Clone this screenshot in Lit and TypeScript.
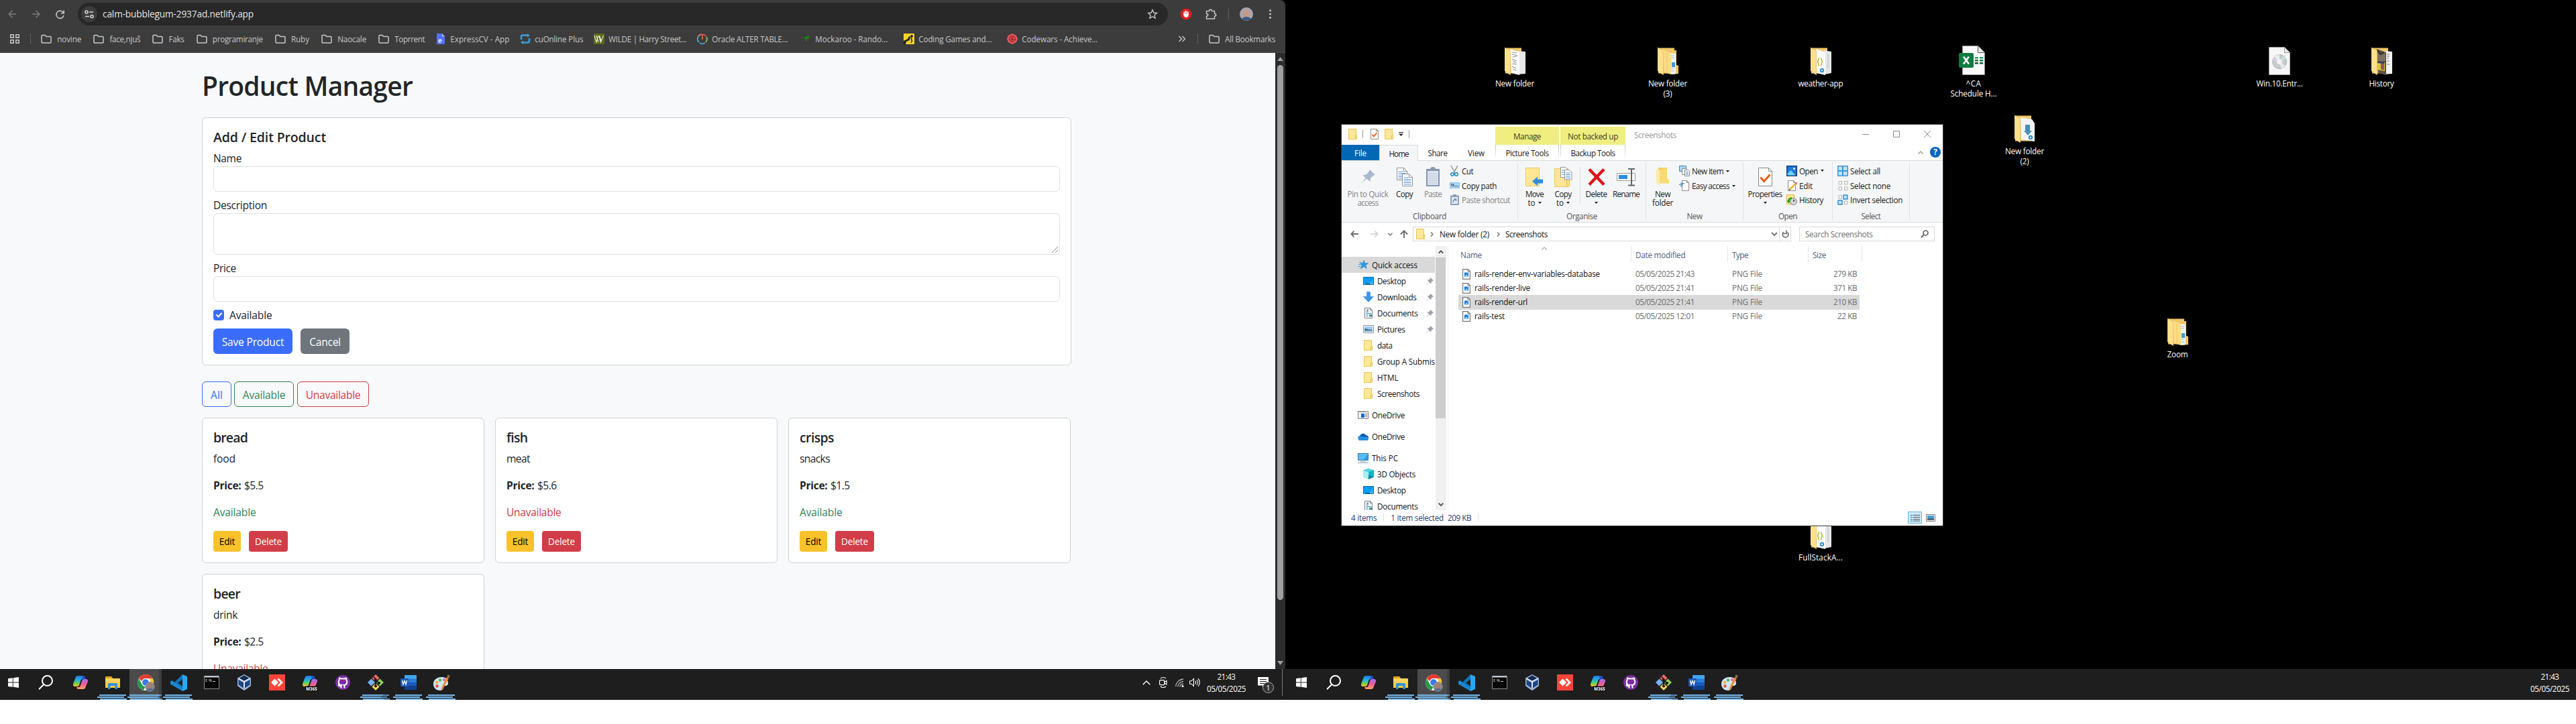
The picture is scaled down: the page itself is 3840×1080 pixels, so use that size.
import { LitElement, html, svg, css, nothing, TemplateResult } from "lit";
import { customElement, property } from "lit/decorators.js";

/* ---------- shared pieces ---------- */

const base = css`
  * { box-sizing: border-box; }
  :host { display: block; font-family: "Open Sans", "Noto Sans", sans-serif; font-size: 11.7px; line-height: 16px; }
  svg { display: block; flex: none; overflow: visible; }
  .t { white-space: pre; display: inline-block; flex: none; }
`;

/** Base element: tightens or loosens labels marked with data-w to their design width. */
class Fitted extends LitElement {
  updated() {
    this.renderRoot.querySelectorAll<HTMLElement>("[data-w]").forEach((el) => {
      el.style.letterSpacing = "0px";
      const n = (el.textContent || "").length;
      const d = (Number(el.dataset.w) - el.getBoundingClientRect().width) / n;
      el.style.letterSpacing = d.toFixed(3) + "px";
    });
  }
}

const T = (text: string, w: number, cls = "") => html`<span class="t ${cls}" data-w=${w}>${text}</span>`;

const S = (w: number, h: number, body: unknown, vb = `0 0 ${w} ${h}`) =>
  html`<svg width=${w} height=${h} viewBox=${vb} fill="none">${body}</svg>`;

/* ---------- small explorer icons ---------- */

const folder = () => S(16, 16, svg`<path d="M1.500.5h11v15h-11z" fill="#ffe799" stroke="#e9c455"/><path d="M11.500 15.500v-5.500l2-1v6.500z" fill="#ffe088" stroke="#e9c455"/>`);
const docCheck = () => S(12, 16, svg`<path d="M.5.5h8l3 3v12H.5z" fill="#fff" stroke="#8a8a8a"/><path d="M8.500.5v3h3" stroke="#8a8a8a"/><path d="M2.500 8.500l2.500 3 4.500-5.500" stroke="#ee5a17" stroke-width="1.800"/>`);
const caret = () => S(5, 3, svg`<path d="M0 0h5L2.500 3z" fill="#1b1b1b"/>`);
const docs16 = () => S(16, 16, svg`<path d="M2.500.5h8l3 3v12h-11z" fill="#fff" stroke="#7f7f7f"/><path d="M10.500.5v3h3" stroke="#7f7f7f"/><path d="M4.500 6.500h3M4.500 8.500h8M4.500 10.500h3M4.500 12.500h3" stroke="#2d8fd8"/><path d="M5 5.200l2-2.500v3" stroke="#2d8fd8" stroke-width="1.200"/><path d="M9 10h4v3.500H9z" fill="#4b8a9d"/>`);
const desktop16 = () => S(16, 12, svg`<path d="M.5.5h15v11H.5z" fill="#0a9bf5" stroke="#0670b8"/><path d="M8 11l7-8v8z" fill="#2cb0ff"/><path d="M1 10.500h14" stroke="#0a5c98"/><path d="M2 10.500h1M11 10.500h1M13 10.500h1" stroke="#fff"/>`);
const down16 = () => S(16, 16, svg`<path d="M5.500.5h5v7h5L8 15.500.5 7.500h5z" fill="#3c97e4" stroke="#2f7fc8" stroke-width=".6"/>`);
const pic16 = () => S(16, 12, svg`<path d="M.5.5h15v11H.5z" fill="#fff" stroke="#8b9096"/><path d="M2 2h12v8H2z" fill="#9dcbf5"/><path d="M2 5c3 0 5 1.500 12 2v3H2z" fill="#3f7580"/><path d="M2 8.500c4-1 8 0 12-.5v2H2z" fill="#8fb8e0"/>`);
const star16 = () => S(16, 14, svg`<path d="M9 .5l1.700 4.200 4.800.1-3.800 2.900 1.500 4.800L9 9.700 4.700 12.600l1.500-4.700L3.500 5l4-.3z" fill="#2a9be8" stroke="#1b7cc4" stroke-width=".6"/><path d="M2 3.500h4M1 6.500h3M0 9.500h5M3 12h2" stroke="#4aa9ea"/>`);
const oneOrg = () => S(16, 12, svg`<path d="M.5.5h15v11H.5z" fill="#f2f2f2" stroke="#7d7d7d"/><path d="M0 1h16" stroke="#9a9a9a" stroke-width="2"/><path d="M5 4h5v6H5z" fill="#0f6fd0"/><path d="M11 4.500h3M11 6.500h3M11 8.500h3" stroke="#888"/><path d="M12 1h1M14 1h1" stroke="#fff"/>`);
const cloud = () => S(16, 11, svg`<path d="M3 4.500C4 1 9-1 12 3c3 .3 4 2 4 4L8 8 0 6.500c0-1 1-2 3-2z" fill="#0b5fb0"/><path d="M1 9.500C-1 6.500 3 3.500 6 5l4 1c4-2 6 0 6 2.500S14.500 11 13 11H3c-1 0-1.700-.7-2-1.500z" fill="#2590e0"/>`);
const pc16 = () => S(16, 15, svg`<path d="M.5.5h15v10H.5z" fill="#59bdf7" stroke="#38759f"/><path d="M8 10l7-8v8z" fill="#2aa0ec"/><path d="M4 12.500h8" stroke="#9fb4c4"/><path d="M0 14.300h16" stroke="#8798a8"/>`);
const cube = () => S(16, 16, svg`<path d="M8 0l8 2.500v10L8 16l-8-3.500v-10z" fill="#12b5c8"/><path d="M0 2.500L8 5v11l-8-3.500z" fill="#a8eef2"/><path d="M0 2.500L8 0l8 2.500L8 5z" fill="#4fd3de"/><path d="M8 10l8 2.500L8 16z" fill="#0b7f92"/>`);
const pinned = () => S(11, 11, svg`<path d="M6.500 0l4.500 4.500-1.300.4L7.500 7l-.2 2.500L4.200 6.800.5 10.500l-.5.500.5-1L4 6.300 1.200 3.700l2.600-.2L6 1.300z" fill="#98a4af"/>`);
const png = () => S(12, 16, svg`<path d="M.6.6h7.600l3.200 3.200v11.600H.6z" fill="#fff" stroke="#777" stroke-width="1.200"/><path d="M8 .6v3.400h3.400" stroke="#777"/><path d="M3 5.500h6v6H3z" fill="#1674d1"/><path d="M3 11.500l3-3.500 3 3.500z" fill="#8fd0ff"/><path d="M7 6.500h1v1H7z" fill="#fff"/>`);
const lined = (x: number, y: number, c = "#5d93d8") => svg`<path d="M${x + 0.5} ${y + 0.5}h10l5 5v13h-15z" fill="#fff" stroke="#8f9399"/><path d="M${x + 10.5} ${y + 0.5}v5h5" stroke="#8f9399"/><path d="M${x + 2.5} ${y + 6}h7M${x + 2.5} ${y + 8.5}h11M${x + 2.5} ${y + 11}h11M${x + 2.5} ${y + 13.5}h11M${x + 2.5} ${y + 16}h11" stroke="${c}"/>`;

/* ---------- explorer window ---------- */

const chevR = () => S(5, 7, svg`<path d="M1 .5l3 3-3 3" stroke="#6b6b6b" stroke-width="1.300"/>`);

@customElement("explorer-window")
class ExplorerWindow extends Fitted {
  static styles = [base, css`
    :host { width: 896px; height: 598px; background: #fff; box-shadow: 0 0 0 1px #3a3a3a; color: #1b1b1b; display: flex; flex-direction: column; overflow: hidden; }
    .row { display: flex; align-items: center; }
    .title { display: flex; height: 30px; flex: none; }
    .qat { width: 229px; display: flex; align-items: center; padding: 0 0 2px 9px; height: 30px; }
    .qat .bar { width: 1px; height: 12px; background: #9b9b9b; }
    .m1 { margin-left: 6px; } .m2 { margin-left: 11px; } .m3 { margin-left: 8px; } .m4 { margin-left: 6px; }
    .ctx { background: #f0ee80; height: 27px; align-self: flex-end; display: flex; align-items: center; justify-content: center; margin-right: 2px; color: #3c3c28; }
    .c1 { width: 95px; } .c2 { width: 97px; }
    .name { color: #999; padding: 7px 0 0 11px; flex: 1; }
    .wb { display: flex; gap: 36px; padding: 9px 18px 0 0; }
    .tabs { display: flex; height: 24px; flex: none; border-bottom: 1px solid #dadbdc; align-items: stretch; }
    .tab { display: flex; align-items: center; justify-content: center; height: 24px; }
    .file { width: 56px; background: #0067b5; color: #fff; height: 23px; }
    .home { width: 58px; background: #f5f6f7; border: 1px solid #dadbdc; border-bottom: 0; }
    .share { width: 58px; } .view { width: 57px; }
    .tool { height: 18px; align-self: flex-start; padding-top: 6px; border: solid #c8c8c8; border-width: 0 1px; margin-right: 2px; border-image: linear-gradient(#bdbdbd, #f0f0f0) 1; }
    .tabs .end { margin-left: auto; display: flex; gap: 10px; align-items: center; padding: 0 3px 1px 0; }
    .ribbon { display: flex; height: 92px; flex: none; background: #f5f6f7; border-bottom: 1px solid #dadbdc; }
    .group { border-right: 1px solid #e1e2e4; margin: 2px 0 3px; padding-top: 2px; height: 86px; display: flex; flex-direction: column; }
    .g1 { width: 263px; } .g2 { width: 191px; } .g3 { width: 145px; } .g4 { width: 133px; } .g5 { width: 115px; }
    .cols { display: flex; height: 65px; }
    .g1 .cols, .g4 .cols { padding-left: 3px; } .g2 .cols, .g3 .cols { padding-left: 4px; } .g5 .cols { padding-left: 7px; }
    .glabel { margin-top: 5px; text-align: center; color: #555; }
    .big { display: flex; flex-direction: column; align-items: center; line-height: 13px; }
    .big .ico { height: 39px; display: flex; align-items: center; justify-content: center; }
    .big .l2 { display: flex; align-items: center; gap: 4px; height: 13px; }
    .dim { color: #838383; }
    .small { display: flex; flex-direction: column; }
    .small .row { height: 22px; gap: 3px; }
    .small .ic { width: 16px; display: flex; justify-content: center; }
    .small .more { margin-left: 1px; }
    .sp3 { margin-left: 3px; } .sp4 { margin-left: 4px; }
    .bar2 { width: 1px; height: 55px; background: #dcdddf; margin: 5px 3px 0; }
    .nav { display: flex; align-items: flex-start; height: 35px; flex: none; padding-top: 6px; }
    .arrows { width: 106px; height: 22px; display: flex; align-items: center; padding-left: 13px; }
    .addr { width: 564px; height: 22px; border: 1px solid #d9d9d9; display: flex; align-items: center; padding-left: 3px; color: #111; }
    .addr .ref { margin-left: auto; display: flex; align-items: center; height: 20px; }
    .addr .cell { border-left: 1px solid #d9d9d9; width: 17px; height: 20px; display: flex; align-items: center; justify-content: center; margin-left: 2px; }
    .search { width: 202px; height: 22px; border: 1px solid #d9d9d9; margin-left: 12px; display: flex; align-items: center; justify-content: space-between; padding: 0 8px; color: #6f6f6f; }
    .body { display: flex; height: 394px; flex: none; overflow: hidden; }
    .tree { width: 139px; padding-top: 16px; overflow: hidden; color: #111; margin-right: 1px; }
    .node { display: flex; align-items: center; height: 24px; padding-left: 31px; }
    .node .t { margin-top: -1px; }
    .node .ic { width: 18px; display: flex; justify-content: center; margin-right: 4px; flex: none; }
    .node.root { padding-left: 23px; }
    .node.gap { margin-top: 8px; }
    .node.on { background: #d9d9d9; }
    .node .pin { margin-left: auto; margin-right: 2px; }
    .scroll { width: 16px; background: #f0f0f0; display: flex; flex-direction: column; align-items: center; }
    .scroll .arr { height: 17px; display: flex; align-items: center; }
    .scroll .thumb { width: 15px; height: 240px; background: #cdcdcd; align-self: flex-start; }
    .scroll .arr.b { margin-top: auto; }
    .list { flex: 1; margin-left: 2px; border-left: 1px solid #f0f0f0; }
    .head { display: grid; grid-template-columns: 273px 144px 120px 80px; height: 24px; color: #4c607a; }
    .head div { border-right: 1px solid #e5e5e5; padding: 1px 0 0 6px; display: flex; align-items: center; }
    .head .n { padding-left: 18px; }
    .sort { align-self: flex-start; margin-left: 89px; }
    .files { padding: 7px 0 0 15px; }
    .f { display: grid; grid-template-columns: 258px 144px 120px 76px; width: 598px; height: 21px; align-items: center; color: #6d6d6d; }
    .f .t { position: relative; top: -1px; }
    .f.on { background: #d9d9d9; box-shadow: 0 1px #d9d9d9; }
    .f .fn { display: flex; align-items: center; gap: 6px; padding-left: 6px; color: #111; }
    .f .c { padding-left: 6px; }
    .f .r { text-align: right; padding-right: 4px; }
    .status { display: flex; align-items: center; height: 23px; padding: 0 8px 1px 14px; color: #24406f; flex: none; }
    .status .s { width: 1px; height: 12px; background: #e3e3e3; margin: 0 10px; }
    .status .vw { margin-left: auto; display: flex; gap: 3px; }
    .status .sel { width: 21px; height: 18px; border: 1px solid #66b8ea; background: #cce8f8; display: flex; align-items: center; justify-content: center; }
    .status .nosel { width: 20px; height: 18px; display: flex; align-items: center; justify-content: center; }
  `];

  big(w: number, ico: unknown, l1: unknown, l2: unknown = nothing, cls = "") {
    return html`<div class="big ${cls}" style="width:${w}px"><div class="ico">${ico}</div><div>${l1}</div><div class="l2">${l2}</div></div>`;
  }
  small(ico: unknown, text: string, w: number, more = false, cls = "") {
    return html`<div class="row ${cls}"><div class="ic">${ico}</div>${T(text, w)}${more ? html`<div class="more">${caret()}</div>` : nothing}</div>`;
  }
  node(ico: unknown, text: string, w: number, cls = "", pin = false) {
    return html`<div class="node ${cls}"><div class="ic">${ico}</div>${T(text, w)}${pin ? html`<div class="pin">${pinned()}</div>` : nothing}</div>`;
  }

  render() {
    const files: [string, number, string, string, number][] = [
      ["rails-render-env-variables-database", 187, "05/05/2025 21:43", "279 KB", 35],
      ["rails-render-live", 83, "05/05/2025 21:41", "371 KB", 35],
      ["rails-render-url", 79, "05/05/2025 21:41", "210 KB", 35],
      ["rails-test", 45, "05/05/2025 12:01", "22 KB", 29],
    ];
    const sq = (x: number, y: number, on: boolean) => svg`<path d="M${x + 0.5} ${y + 0.5}h${on ? 6 : 4.5}v${on ? 6 : 4.5}h-${on ? 6 : 4.5}z" fill="${on ? "#bfe3fb" : "#fbfbfb"}" stroke="${on ? "#2b8fe0" : "#b3b3b3"}" stroke-width="${on ? 1.4 : 1}"/>`;
    return html`
      <div class="title">
        <div class="qat">${folder()}<div class="bar m1"></div><div class="m2">${docCheck()}</div><div class="m3">${folder()}</div>
          <div class="m4">${S(7, 6, svg`<path d="M0 .5h7" stroke="#222"/><path d="M0 2.500h7L3.500 6z" fill="#222"/>`)}</div><div class="bar m3"></div></div>
        <div class="ctx c1">${T("Manage", 41)}</div><div class="ctx c2">${T("Not backed up", 75)}</div>
        <div class="name">${T("Screenshots", 63)}</div>
        <div class="wb">
          ${S(10, 11, svg`<path d="M0 5.500h10" stroke="#8a8a8a"/>`)}
          ${S(10, 11, svg`<path d="M.5.5h9v9h-9z" stroke="#8a8a8a"/>`)}
          ${S(10, 11, svg`<path d="M0 0l10 10M10 0L0 10" stroke="#8a8a8a"/>`)}
        </div>
      </div>
      <div class="tabs">
        <div class="tab file">${T("File", 18)}</div><div class="tab home">${T("Home", 29)}</div>
        <div class="tab share">${T("Share", 29)}</div><div class="tab view">${T("View", 25)}</div>
        <div class="tab tool c1">${T("Picture Tools", 64)}</div><div class="tab tool c2">${T("Backup Tools", 66)}</div>
        <div class="end">${S(8, 5, svg`<path d="M.5 4.500L4 1l3.500 3.500" stroke="#8b8b8b" stroke-width="1.200"/>`)}
          <svg width="16" height="16" viewBox="0 0 16 16"><circle cx="8" cy="8" r="8" fill="#0a64bd"/><text x="8" y="12.300" font-size="12" font-weight="700" fill="#fff" text-anchor="middle">?</text></svg></div>
      </div>
      <div class="ribbon">
        <div class="group g1"><div class="cols">
          ${this.big(72, S(21, 21, svg`<path d="M13 0l8 8-2.500.8-4.500 4-.5 5.200-5.500-4.500L0 21l6.500-8.500L2.500 8l5-.5 4-4.500z" fill="#a9b9cd"/>`), T("Pin to Quick", 61), T("access", 31), "dim")}
          ${this.big(37, S(24, 28, svg`${lined(0, 0)}${lined(8, 9)}`), T("Copy", 25))}
          ${this.big(48, S(20, 29, svg`<path d="M0 3h20v26H0z" fill="#8296b5"/><path d="M2 6h16v21H2z" fill="#dbe3ef"/><path d="M6 3c0-2 2-3 4-3s4 1 4 3l1 3H5z" fill="#8c99ab"/><path d="M3 10h14M3 13.500h14M3 17h14M3 20.500h14M3 24h14" stroke="#c2cddd"/>`), T("Paste", 26), nothing, "dim")}
          <div class="small">
            ${this.small(S(12, 16, svg`<path d="M1 0l6 11M11 0L5 11" stroke="#8e949b" stroke-width="1.400"/><circle cx="3" cy="13" r="2.300" stroke="#1f8ad0" stroke-width="1.500"/><circle cx="9" cy="13" r="2.300" stroke="#1f8ad0" stroke-width="1.500"/>`), "Cut", 17)}
            ${this.small(S(15, 9, svg`<path d="M.5.5h14v8H.5z" fill="#a8d8f8" stroke="#88bfe6"/><path d="M2.500 2l1.500 4M5 2l1.500 4M8 5.500h1M10 5.500h1M12 5.500h1" stroke="#222"/>`), "Copy path", 52)}
            ${this.small(S(13, 16, svg`<path d="M0 1.500h13V16H0z" fill="#8ea3c2"/><path d="M2 4h9v10H2z" fill="#e1e8f2"/><path d="M4 0h5v3H4z" fill="#8e9bb0"/><path d="M4 12c0-3 1-4 4-4.500M5.500 7h3v3" stroke="#7488ab" stroke-width="1.400"/>`), "Paste shortcut", 72, false, "dim")}
          </div></div><div class="glabel">${T("Clipboard", 50)}</div></div>
        <div class="group g2"><div class="cols">
          ${this.big(41, S(27, 28, svg`<path d="M.5.5h20v27H.5z" fill="#ffe596" stroke="#ecc95c"/><path d="M2.500 1v26" stroke="#fff0bf"/><path d="M10 20.500l8-7v4h8v6h-8v4z" fill="#2f8fe0"/>`), T("Move", 27), html`${T("to", 11)}${caret()}`)}
          ${this.big(44, S(27, 30, svg`<path d="M.5 2.500h20v27H.5z" fill="#ffe596" stroke="#ecc95c"/><path d="M18.500 29v-10l4-1v11z" fill="#ffdf85" stroke="#e9c455"/><path d="M9.500.5h7l3 3v12h-10z" fill="#fff" stroke="#8f9399"/><path d="M11 5h6M11 8h7M11 11h7" stroke="#5d93d8"/><path d="M15.500 4.500h7l3.500 3.500v11h-10.500z" fill="#fff" stroke="#8f9399"/><path d="M17 9h7M17 11.500h7M17 14h7M17 16.500h7" stroke="#5d93d8"/>`), T("Copy", 25), html`${T("to", 11)}${caret()}`)}
          <div class="bar2"></div>
          ${this.big(41, S(26, 26, svg`<path d="M2 1.500l22 23M24 1.500L2 24.500" stroke="#e0141c" stroke-width="4.500"/>`), T("Delete", 32), caret())}
          ${this.big(48, S(28, 26, svg`<path d="M.5 7.500h27v11H.5z" fill="#fff" stroke="#9a9a9a"/><path d="M3 10h13v6H3z" fill="#2b8fe3"/><path d="M17 1h10M17 25.500h10M22 1v24" stroke="#666" stroke-width="2"/>`), T("Rename", 40))}
        </div><div class="glabel">${T("Organise", 46)}</div></div>
        <div class="group g3"><div class="cols">
          ${this.big(41, S(19, 27, svg`<path d="M3 0h13v19l2 1v3H3z" fill="#f5cf69"/><path d="M0 1l5.500 3v23L0 23z" fill="#ffe9a6"/><path d="M5.500 4L16 1v16l3 1.500v5H5.500z" fill="#f9d877"/>`), T("New", 23), T("folder", 31))}
          <div class="small sp4">
            ${this.small(S(16, 16, svg`<path d="M.5.5h10v8H.5z" fill="#a9d6f3" stroke="#4787ae"/><path d="M4.500 4.500h6v9h-6z" fill="#fff" stroke="#8a8a8a"/><path d="M8.500 6.500h5l2 2v7h-7z" fill="#fff" stroke="#8a8a8a"/><path d="M10 9.500h4M10 11.500h4M10 13.500h4" stroke="#5d93d8"/>`), "New item", 47, true)}
            ${this.small(S(16, 16, svg`<path d="M4.500.5h7l3 3v12h-10z" fill="#fff" stroke="#8a8a8a"/><path d="M11.500.5v3h3" stroke="#8a8a8a"/><path d="M2 4.500h6M0 6.500h6M2 8.500h3" stroke="#2b6fb5" stroke-width="1.200"/>`), "Easy access", 56, true)}
          </div></div><div class="glabel">${T("New", 23)}</div></div>
        <div class="group g4"><div class="cols">
          ${this.big(58, S(21, 28, svg`<path d="M.5.5h15l5 5v22H.5z" fill="#fcfcfc" stroke="#8a8a8a"/><path d="M15.500.5v5h5" stroke="#8a8a8a"/><path d="M3.500 14.500l5 6 9-10" stroke="#f05a14" stroke-width="3"/>`), T("Properties", 51), caret())}
          <div class="small sp3">
            ${this.small(S(16, 16, svg`<path d="M0 0h16v16H0z" fill="#123a7d"/><path d="M1.500 1.500h13v13h-13z" fill="#1e7bdb"/><path d="M1.500 12l5-5 7 7.500h-12z" fill="#6fd2fb"/><circle cx="11.500" cy="4.500" r="1.500" fill="#fff"/>`), "Open", 28, true)}
            ${this.small(S(16, 16, svg`<path d="M2.500.5h8l3 3v12h-11z" fill="#fff" stroke="#8a8a8a"/><path d="M10.500.5v3h3" stroke="#8a8a8a"/><path d="M5 13.500l9-8.500" stroke="#f3b13c" stroke-width="2.600"/><path d="M13.500 5.500l2-2" stroke="#e86a6a" stroke-width="2.600"/><path d="M4 14.500l1.500-1.500" stroke="#444" stroke-width="1.500"/>`), "Edit", 20)}
            ${this.small(S(16, 16, svg`<path d="M.5.5h11v14H.5z" fill="#ffe796" stroke="#dcb84e"/><circle cx="10.500" cy="10.500" r="5" fill="#dadada" stroke="#777"/><path d="M10.500 7.500v3l2.500-2" stroke="#333"/><path d="M3 10.500c0-3 2-5 5-5" stroke="#1ba01b" stroke-width="2.500"/><path d="M0 9.500h6.500L3.500 13z" fill="#1ba01b"/>`), "History", 36)}
          </div></div><div class="glabel">${T("Open", 28)}</div></div>
        <div class="group g5"><div class="cols"><div class="small">
          ${this.small(S(16, 16, svg`<path d="M0 0h16v16H0z" fill="#3a97e2"/><path d="M1.500 1.500h5.500V7H1.500zM9 1.500h5.500V7H9zM1.500 9h5.500v5.500H1.500zM9 9h5.500v5.500H9z" fill="#bfe3fb"/>`), "Select all", 45)}
          ${this.small(S(16, 16, svg`${sq(1.5, 1, false)}${sq(10, 1, false)}${sq(1.5, 9.5, false)}${sq(10, 9.5, false)}`), "Select none", 60)}
          ${this.small(S(16, 16, svg`${sq(1.5, 1, false)}${sq(8.5, 0.5, true)}${sq(0.5, 8.5, true)}${sq(10, 9.5, false)}`), "Invert selection", 78)}
        </div></div><div class="glabel">${T("Select", 29)}</div></div>
      </div>
      <div class="nav">
        <div class="arrows">
          ${S(12, 10, svg`<path d="M12 5H1.500M5.500 .7L1.300 5l4.200 4.300" stroke="#6c6c6c" stroke-width="1.800"/>`)}
          ${S(12, 10, svg`<path d="M18 5h10.500M24.500 .7L28.700 5l-4.200 4.300" stroke="#d5d5d5" stroke-width="1.800"/>`)}
          ${S(7, 5, svg`<path d="M32.500 .8L35.500 4l3-3.200" stroke="#777" stroke-width="1.500"/>`)}
          ${S(12, 12, svg`<path d="M49 12V1.500M43.800 6.500L49 1.300l5.200 5.200" stroke="#6c6c6c" stroke-width="1.900"/>`)}
        </div>
        <div class="addr">${folder()}<div style="width:6px"></div>${chevR()}<div style="width:9px"></div>${T("New folder (2)", 74)}<div style="width:11px"></div>${chevR()}<div style="width:8px"></div>${T("Screenshots", 63)}
          <div class="ref">${S(10, 7, svg`<path d="M1 1l4 4 4-4" stroke="#7a7a7a" stroke-width="2"/>`)}<div class="cell">${S(11, 12, svg`<path d="M8.500 3.500a4.300 4.300 0 1 1-5.500-.3" stroke="#666" stroke-width="1.600"/><path d="M2 0.500h5v4.500" stroke="#666" stroke-width="1.600" transform="rotate(90 4.500 3)"/>`)}</div></div></div>
        <div class="search">${T("Search Screenshots", 100.5)}${S(12, 12, svg`<circle cx="7.500" cy="4.500" r="3.500" stroke="#666" stroke-width="1.700"/><path d="M5 7L.7 11.300" stroke="#666" stroke-width="1.900"/>`)}</div>
      </div>
      <div class="body">
        <div class="tree">
          ${this.node(star16(), "Quick access", 68, "root on")}
          ${this.node(desktop16(), "Desktop", 42.6, "", true)}
          ${this.node(down16(), "Downloads", 58.6, "", true)}
          ${this.node(docs16(), "Documents", 60.6, "", true)}
          ${this.node(pic16(), "Pictures", 41.6, "", true)}
          ${this.node(folder(), "data", 22.6)}
          ${this.node(folder(), "Group A Submis", 86)}
          ${this.node(folder(), "HTML", 31.6)}
          ${this.node(folder(), "Screenshots", 63)}
          ${this.node(oneOrg(), "OneDrive", 49, "root gap")}
          ${this.node(cloud(), "OneDrive", 49, "root gap")}
          ${this.node(pc16(), "This PC", 39, "root gap")}
          ${this.node(cube(), "3D Objects", 57)}
          ${this.node(desktop16(), "Desktop", 42.6)}
          ${this.node(docs16(), "Documents", 60.6)}
        </div>
        <div class="scroll"><div class="arr">${S(8, 5, svg`<path d="M.7 4.700L4 1.300l3.300 3.400" stroke="#505050" stroke-width="1.800"/>`)}</div><div class="thumb"></div><div class="arr b">${S(8, 5, svg`<path d="M.7.700L4 4.100 7.300.7" stroke="#505050" stroke-width="1.800"/>`)}</div></div>
        <div class="list">
          <div class="head"><div class="n">${T("Name", 32)}<span class="sort">${S(8, 5, svg`<path d="M.5 4.500L4 1l3.500 3.500" stroke="#777"/>`)}</span></div><div>${T("Date modified", 74.4)}</div><div>${T("Type", 24)}</div><div>${T("Size", 20)}</div></div>
          <div class="files">${files.map((f, i) => html`<div class="f ${i === 2 ? "on" : ""}"><div class="fn">${png()}${T(f[0], f[1])}</div><div class="c">${T(f[2], 88)}</div><div class="c">${T("PNG File", 45)}</div><div class="r">${T(f[3], f[4])}</div></div>`)}</div>
        </div>
      </div>
      <div class="status">${T("4 items", 38.3)}<div class="s"></div>${T("1 item selected", 78.7)}<div style="width:6px"></div>${T("209 KB", 35)}<div class="s"></div>
        <div class="vw"><div class="sel">${S(14, 11, svg`<path d="M0 1.500h3M0 4.500h3M0 7.500h3M0 10h3" stroke="#1d78b8"/><path d="M4 1.500h10M4 4.500h10M4 7.500h10M4 10h10" stroke="#555"/>`)}</div><div class="nosel">${S(14, 11, svg`<path d="M.5.5h13v10H.5z" fill="#fff" stroke="#777"/><path d="M2 2h10v4H2z" fill="#4b9cd8"/><path d="M2 6h10v3H2z" fill="#4f6a76"/>`)}</div></div></div>`;
  }
}

/* ---------- desktop icons ---------- */

const BACK = svg`<path d="M1 .5h24v38H1z" fill="#efc766"/>`;
const FRONT = svg`<path d="M0 0l8.500 5v36L0 35z" fill="#fde08c"/><path d="M0 0l8.500 5v36" stroke="#e2b95a" stroke-width=".6"/>`;
const deskFolder: Record<string, () => TemplateResult> = {
  papers: () => S(31, 41, svg`${BACK}<path d="M18 5l13 1v33l-13 1z" fill="#e9e9e9"/><path d="M8 2l14 5v34l-12-3z" fill="#fafafa"/><path d="M11 7l7 1M11 10l8 2M12 14l6-1M11 17l7 3M12 20l5 3M11 24l7 1M11 28l6 3M12 32l5 2" stroke="#9b9b9b" stroke-width="1.200"/>${FRONT}`),
  nested: () => S(31, 41, svg`${BACK}<path d="M20 4h8v22l3 1v12l-9 1z" fill="#efc766"/><path d="M19 8l8 1v30l-8 1z" fill="#eef2f6"/><path d="M20 12h5M20 15h5M20 31h5M20 35h5" stroke="#b3bfc9"/><path d="M21 22h5v7h-5z" fill="#3f9bd8"/><path d="M8 3l12 5v32l-10-3z" fill="#fbdc84"/><path d="M14 7v31" stroke="#efc766"/>${FRONT}`),
  code: () => S(31, 41, svg`${BACK}<path d="M20 4l11 2v32l-10 2z" fill="#e4e6e8"/><path d="M26 9v22" stroke="#b5b9bd"/><path d="M8 2l14 5v34l-13-3z" fill="#fafafa"/><path d="M13 16c-2 0-1 5-3 5 2 0 1 6 3 6M15 16c2 0 1 5 3 5-2 0-1 6-3 6" stroke="#a8b400" stroke-width="1.300"/><circle cx="17" cy="34" r="2.200" stroke="#2a8fd8" stroke-width="2"/>${FRONT}`),
  arrow: () => S(31, 41, svg`${BACK}<path d="M9 3l17 3 4 6v27l-20-3z" fill="#f2f4f6"/><path d="M16 14h7v9h3l-6 7-6-7h2z" fill="#4c8db8"/><circle cx="24" cy="33" r="2.200" stroke="#2a8fd8" stroke-width="2"/>${FRONT}`),
  photo: () => S(31, 41, svg`${BACK}<path d="M18 5l13 1v33l-13 1z" fill="#f4f4f4"/><path d="M23 10h4M23 13h4M23 16h3M23 20h4M23 25h4" stroke="#a9a9a9" stroke-width="1.500"/><path d="M8 2l14 5v34l-12-3z" fill="#5e5446"/><path d="M9 6l6 3 6-1v12H9z" fill="#7d7160"/><path d="M9 5l5 5 5-3" stroke="#2d2823" stroke-width="2"/><path d="M9 22l11 1v12l-11-2z" fill="#d8cb2f"/><path d="M14 23l5 .5v10l-5-1z" fill="#9a5068"/><path d="M9 22l10 1" stroke="#2c3f78" stroke-width="2"/>${FRONT}`),
  excel: () => S(44, 44, svg`<path d="M5.500.5h23l10 10v33h-33z" fill="#fafafa" stroke="#8c8c8c"/><path d="M28.500.5v10h10" fill="#e8e8e8" stroke="#555"/><path d="M24 17h5v2.500h-5zM31 17h5v2.500h-5z" fill="#21a366"/><path d="M24 21h5v2.500h-5zM31 21h5v2.500h-5z" fill="#107c41"/><path d="M24 25h5v2.500h-5zM31 25h5v2.500h-5z" fill="#0b5c30"/><rect y="11" width="22" height="22" rx="2" fill="#107c41"/><path d="M7 16.500l8 11M15 16.500l-8 11" stroke="#fff" stroke-width="2.600"/>`),
  disc: () => S(32, 42, svg`<path d="M.5.5h23l8 8v33H.5z" fill="#f6f6f6" stroke="#9a9a9a"/><path d="M23.500.5v8h8" fill="#e8e8e8" stroke="#9a9a9a"/><circle cx="16" cy="22" r="10.500" fill="#c6cbce" stroke="#aeb3b6"/><path d="M16 22L8 15a10.500 10.500 0 0 1 8-3.500zM16 22l8.500 6a10.500 10.500 0 0 1-6 4z" fill="#e8ecec"/><path d="M16 22L5.700 20a10.500 10.500 0 0 1 2-4z" fill="#e2cbe4"/><path d="M16 22l6-8.500a10.500 10.500 0 0 1 4 4z" fill="#bfe6d6"/><circle cx="16" cy="22" r="3.500" fill="#e4e7e8" stroke="#fff"/><circle cx="16" cy="22" r="1.500" fill="#fff"/>`),
};

@customElement("desk-icon")
class DeskIcon extends Fitted {
  static styles = [base, css`
    :host { width: 80px; color: #fff; text-align: center; line-height: 15px; }
    .pic { height: 46px; display: flex; justify-content: center; align-items: flex-end; margin-bottom: 5px; }
    .l { height: 15px; }
  `];
  @property() kind = "papers";
  @property({ attribute: false }) lines: [string, number][] = [];
  render() {
    return html`<div class="pic">${deskFolder[this.kind]()}</div>${this.lines.map((l) => html`<div class="l">${T(l[0], l[1])}</div>`)}`;
  }
}

/* ---------- taskbar ---------- */

let gid = 0;
const copilot = (label = false) => {
  const a = "cg" + gid++, b = "cg" + gid++;
  return S(24, 24, svg`<defs><linearGradient id=${a} x1="0" y1="0" x2="0" y2="1"><stop offset="0" stop-color="#2078e8"/><stop offset=".45" stop-color="#28b8d8"/><stop offset=".7" stop-color="#6dcf50"/><stop offset="1" stop-color="#f5c420"/></linearGradient><linearGradient id=${b} x1="0" y1="0" x2="0" y2="1"><stop offset="0" stop-color="#a56bf0"/><stop offset=".5" stop-color="#ee5a9a"/><stop offset="1" stop-color="#ffa25a"/></linearGradient></defs>
  <path d="M8 2h8c2 0 2.500 1.500 3 3l.7 2H15c-2 0-2.500 1-3 3l-2 6c-.5 1.500-1.500 2-3 2H4c-3 0-3.500-2-2.700-4.500L4.500 5C5 3 6 2 8 2z" fill="url(#${a})"/>
  <path d="M16 22H9c-2 0-2.500-1-3-3h3c2 0 2.500-1 3-3l2-6c.5-2 1.500-3 3-3h3c3 0 3.500 2 2.700 4.500L19.500 19c-.5 2-1.500 3-3.500 3z" fill="url(#${b})"/>
  <path d="M14 2h2c2 0 2.500 1.500 3 3l.7 2H15z" fill="#1c4fc8"/>${label ? svg`<path d="M5 17.500h19V25H5z" fill="#0a0a0a"/><text x="14.500" y="24" font-size="7.500" font-weight="700" fill="#fff" text-anchor="middle" textLength="17" lengthAdjust="spacingAndGlyphs">M365</text>` : nothing}`);
};
const winLogo = () => S(16, 16, svg`<path d="M0 2.200l6.800-.9v6.300H0zM7.700 1.200L16 0v7.600H7.700zM0 8.500h6.800v6.300L0 13.900zM7.700 8.500H16V16l-8.300-1.200z" fill="#fff"/>`);
const glass = () => S(22, 22, svg`<circle cx="13.500" cy="8.500" r="7.500" stroke="#fff" stroke-width="2"/><path d="M8.200 14L1 21.200" stroke="#fff" stroke-width="2"/>`);
const taskIcons: (() => TemplateResult)[] = [
  () => S(22, 19, svg`<path d="M0 0h9l2 3h11v14H0z" fill="#ffd35e"/><path d="M0 0h9l2 3H0z" fill="#e5a413"/><path d="M0 9h22v8H0z" fill="#ffcb47"/><path d="M4 19v-7c0-1.500 1-2 2-2h10c1 0 2 .5 2 2v7h-3.500v-5h-7v5z" fill="#3691d8"/>`),
  () => S(25, 25, svg`<circle cx="12" cy="12" r="12" fill="#fff"/><path d="M12 0a12 12 0 0 1 10.400 6H12a6 6 0 0 0-5.500 4L1.600 6A12 12 0 0 1 12 0z" fill="#e33b2e"/><path d="M1.600 6l5.200 9A6 6 0 0 0 12 18l-3 5.600A12 12 0 0 1 1.600 6z" fill="#259b4b"/><path d="M22.400 6A12 12 0 0 1 12 24l5.200-9a6 6 0 0 0 0-9z" fill="#fcc31e"/><circle cx="12" cy="12" r="6" fill="#fff"/><circle cx="12" cy="12" r="4.800" fill="#3479e8"/><ellipse cx="18.500" cy="18.500" rx="7" ry="7.500" fill="#8d8a96"/><path d="M14 17c0-5 9-5 9 0l-1 5c-2 3-5 3-7 0z" fill="#a57f71"/><path d="M13 22c3-2 8-2 11 0-1 3-3 4-5.500 4S14 25 13 22z" fill="#5e6f8e"/>`),
  () => S(25, 25, svg`<path d="M18 0L6 12 2.500 9.300 0 10.500v4l2.500 1.300L6 13l12 12 1-1V1z" fill="#1173b8"/><path d="M0 10.500l2.500-1.300L18 21v4L0 14.500z" fill="#1b86cf"/><path d="M18 0l7 3v19l-7 3z" fill="#2aa7ee"/><path d="M18 7.500v10L11 12.500z" fill="#1f1f1f"/>`),
  () => S(23, 20, svg`<path d="M.5.5h22v19H.5z" fill="#050505" stroke="#8a8f94"/><path d="M1 1.500h21" stroke="#cfd4d8" stroke-width="2"/><path d="M4.500 5.500H3v3h1.500M6.500 6v.5M6.500 8v.5M8 5l1.500 4M10 5l1.500 4M13 8.500h4" stroke="#ddd" stroke-width=".9"/>`),
  () => S(20, 24, svg`<path d="M10 0l10 5.500V17l-6 4.500L10 24l-4-2.500L0 17V5.500z" fill="#9fb6dc"/><path d="M10 1.500l8 4.500-8 4.500L2 6z" fill="#122b50"/><path d="M1.500 8l7.500 4.300v8.200l-7.500-5zM18.500 8L11 12.300v8.200l7.500-5z" fill="#1c4480"/><path d="M2 6l8 4.500L18 6M10 10.500V20" stroke="#fff" stroke-width="1.300"/>`),
  () => S(24, 24, svg`<path d="M0 0h24v24H0z" fill="#fb443a"/><path d="M8.500 6.500L14 12l-5.500 5.500L3 12z" fill="#fff"/><path d="M13.500 7.500L18 12l-4.500 4.500M13 8l1.500-1.500L20 12l-5.500 5.500L13 16" stroke="#fff" stroke-width="1.300"/>`),
  () => copilot(true),
  () => S(22, 22, svg`<circle cx="11" cy="11" r="11" fill="#7b2e9e"/><path d="M8.500 19.500v-3C5 17 5 15 3.700 14.500M8.500 17c0-1 .2-1.500.7-2-3-.4-4.500-2-4.500-4.800 0-1.200.4-2.200 1.100-3-.2-1-.1-2 .2-2.700 1 0 2 .5 2.700 1.100a9 9 0 0 1 4.600 0c.8-.6 1.700-1.100 2.700-1.100.3.8.4 1.800.2 2.700.7.800 1.100 1.800 1.100 3 0 2.800-1.500 4.400-4.500 4.800.5.500.7 1.200.7 2v2.500" stroke="#fff" stroke-width="2"/>`),
  () => S(24, 24, svg`<path d="M12 0l5.500 5.500L12 11 6.500 5.500z" fill="#f26a6a"/><path d="M5.500 6.500L11 12l-5.500 5.500L0 12z" fill="#78b4f4"/><path d="M18.500 6.500L24 12l-5.500 5.500L13 12z" fill="#8ed05c"/><path d="M12 13l5.500 5.500L12 24l-5.500-5.500z" fill="#fbd84e"/><path d="M9 3.500l3 3.500v10M12 9l5 4" stroke="#151515" stroke-width="1.800"/><circle cx="12" cy="8" r="2" fill="#151515"/><circle cx="12" cy="17.500" r="2" fill="#151515"/><circle cx="17" cy="13" r="2" fill="#151515"/>`),
  () => S(24, 22, svg`<path d="M6 0h17a1 1 0 0 1 1 1v5H6z" fill="#41a5ee"/><path d="M6 5.500h18V11H6z" fill="#2b7cd3"/><path d="M6 11h18v5.500H6z" fill="#185abd"/><path d="M6 16.500h18V21a1 1 0 0 1-1 1H6z" fill="#103f91"/><rect y="5" width="12" height="12" rx="1" fill="#1a56b8"/><path d="M2.500 8l1.500 6 2-5.500L8 14l1.500-6" stroke="#fff" stroke-width="1.400"/>`),
  () => S(25, 24, svg`<path d="M12 4c6 0 10 3 10 9 0 3-2 4-4 4s-3 1-3 3-2 4-5 4C4 24 0 20 0 14S6 4 12 4z" fill="#cfe6f5"/><circle cx="5" cy="12" r="2.200" fill="#f3b32e"/><circle cx="5.500" cy="17.500" r="2.200" fill="#e84a3f"/><circle cx="10" cy="8.500" r="2.200" fill="#62b146"/><circle cx="16" cy="8" r="2" fill="#e85fa5"/><path d="M20 4l3 1.500-7 13c-1 3-3 4.500-5 4.500 1-1.500 1-3 2-5z" fill="#e98a32"/><path d="M21.500 0l3.500 2-2 4-3-1.500z" fill="#8a6a4a"/>`),
];

@customElement("task-bar")
class TaskBar extends Fitted {
  static styles = [base, css`
    :host { width: 1920px; height: 46px; background: #1e1e1e; display: flex; color: #fff; overflow: hidden; }
    .c { width: 49px; height: 46px; display: grid; grid-template: 40px / 1fr; justify-items: center; align-items: center; position: relative; }
    .c.a { width: 40px; } .c.b { width: 56px; } .c.d { width: 47.500px; }
    .active { background: linear-gradient(90deg, #4b4b4b 44px, #3d3d3d 44px 48px, #1e1e1e 48px); }
    .lines { position: absolute; left: 0; bottom: 0; height: 8px; width: 52px; }
    .lines i { position: absolute; height: 2px; background: #76b9ed; width: 40px; left: 4.500px; top: 0; }
    .lines i:nth-child(2) { top: 3px; left: 1.500px; }
    .lines i:nth-child(3) { top: 6px; left: 5.500px; }
    .active .lines i { width: 48px; left: 0; background: linear-gradient(90deg, #76b9ed 45px, #5d8db4 45px); }
    .active .lines i:nth-child(2) { left: -3px; } .active .lines i:nth-child(3) { left: 1px; }
    .multi .lines i { background: linear-gradient(90deg, #76b9ed 31px, #5d8db4 31px); }
    .tray { margin-left: auto; display: flex; align-items: stretch; }
    .tray > div { display: flex; align-items: center; justify-content: center; height: 40px; }
    .w24 { width: 24px; } .w25 { width: 25px; } .w22 { width: 22px; }
    .tray > .clock { width: 72px; flex-direction: column; line-height: 18px; height: 39px; }
    .tray > .note { width: 47px; position: relative; padding-right: 9px; }
    .badge { position: absolute; left: 18px; top: 19px; width: 17px; height: 17px; border-radius: 50%; background: #333; border: 1px solid #aaa; line-height: 15px; text-align: center; font-size: 11px; }
    .tray > .end { width: 9px; border-left: 1px solid #777; }
    .tray > .pad { width: 3px; }
  `];
  @property({ type: Boolean }) full = false;
  render() {
    const open = [0, 1, 2, 8, 9, 10];
    return html`
      <div class="c a">${winLogo()}</div><div class="c b">${glass()}</div><div class="c d">${copilot()}</div>
      ${taskIcons.map((ic, i) => html`<div class="c ${i === 1 ? "active" : i === 8 ? "multi" : ""}">${ic()}${open.includes(i) ? html`<div class="lines"><i></i><i></i><i></i></div>` : nothing}</div>`)}
      <div class="tray">
        ${this.full ? html`
          <div class="w24">${S(12, 7, svg`<path d="M.7 6.300L6 1l5.300 5.300" stroke="#fff" stroke-width="1.400"/>`)}</div>
          <div class="w25">${S(12, 16, svg`<path d="M2 2c2-2 6-2 8 0M2 14c2 2 6 2 8 0" stroke="#fff" stroke-width="1.200"/><rect x=".6" y="4.600" width="7" height="7" rx="1" stroke="#fff" stroke-width="1.200"/><path d="M7.600 7.500l3.400-2v5.500l-3.400-2" stroke="#fff" stroke-width="1.200"/>`)}</div>
          <div class="w24">${S(13, 13, svg`<path d="M.6 12A12 12 0 0 1 12 1M3.600 12.500A9 9 0 0 1 12 4.500M6.600 12.500A6 6 0 0 1 12 8" stroke="#aaa" stroke-width="1.300"/><circle cx="11" cy="11.500" r="1.500" fill="#fff"/>`)}</div>
          <div class="w22">${S(16, 14, svg`<path d="M.6 4.800h2.500L6.500 1.500v11L3.100 9.200H.6z" stroke="#fff" stroke-width="1.100"/><path d="M8.800 4.700c1 1.300 1 3.300 0 4.600M11 3c2 2.300 2 5.700 0 8M13.200 1.200c2.700 3.400 2.700 8.200 0 11.600" stroke="#fff" stroke-width="1.100"/>`)}</div>` : nothing}
        <div class="clock">${T("21:43", 27)}${T("05/05/2025", 58)}</div>
        ${this.full ? html`<div class="note">${S(16, 16, svg`<path d="M0 0h16v12.500H10L7 16v-3.500H0z" fill="#fff"/><path d="M3 3.500h10M3 6.500h10M3 9.500h7" stroke="#1e1e1e" stroke-width="1.200"/>`)}<span class="badge">1</span></div><div class="end"></div>` : html`<div class="pad"></div>`}
      </div>`;
  }
}

/* ---------- browser ---------- */

const bFolder = () => S(16, 16, svg`<path d="M1 13V3.500c0-.6.400-1 1-1h4l2 2h6c.600 0 1 .400 1 1V13c0 .6-.4 1-1 1H2c-.6 0-1-.4-1-1z" stroke="#c7c7c7" stroke-width="1.500"/>`);
const fav: Record<string, () => TemplateResult> = {
  cv: () => S(16, 16, svg`<path d="M2 1c0-.6.400-1 1-1h7l4 4.500V15c0 .6-.4 1-1 1H3c-.6 0-1-.4-1-1z" fill="#5470ff"/><path d="M10 0l4 4.500h-4z" fill="#a9b7ff"/><path d="M5 11h4c0-3-4-3-4 0s2.500 2.500 3.500 2" stroke="#fff" stroke-width="1.200"/>`),
  cu: () => S(16, 16, svg`<path d="M2 9V5c0-1.500 1-2.500 2.500-2.500H12M14 7v4c0 1.500-1 2.500-2.500 2.500H4" stroke="#3b9fdd" stroke-width="2.500"/><path d="M11 0l4 2.700-4 3zM5 16l-4-2.700 4-3z" fill="#3b9fdd"/>`),
  wilde: () => S(16, 16, svg`<path d="M0 0h16v16H0z" fill="#5b6a18"/><path d="M1 3l3 10 2.500-9 1.500 0 2.500 9L14.500 3M4 3l3 10M8.500 3l3 9" stroke="#e9ecd8" stroke-width="1.100"/>`),
  oracle: () => S(16, 16, svg`<path d="M6 1.200A7 7 0 0 0 3 13" stroke="#5aa9d8" stroke-width="1.800"/><path d="M4 14a7 7 0 0 0 8 0" stroke="#4aa0d8" stroke-width="1.800"/><path d="M13 13A7 7 0 0 0 14 5" stroke="#8cc04a" stroke-width="1.800"/><path d="M2.500 4A7 7 0 0 1 13.500 4M8 2v7" stroke="#e0603a" stroke-width="1.800"/>`),
  roo: () => S(16, 16, svg`<path d="M2 5.500l4 1 3-2.500 2 0 1-2 1 2.500 2 1-2 1.500-3 1.500-.5 3.500h-2l1-2-1.500-2L5 7.500z" fill="#1f7a1a"/>`),
  code: () => S(16, 16, svg`<path d="M0 0h16v16H0z" fill="#fbd42b"/><path d="M0 16V11l6-3 2-4 2 1-1 5-5 2-1 4z" fill="#222"/><circle cx="12" cy="4" r="2" fill="#222"/><path d="M11 6l1.500 5-1.500 3" stroke="#222" stroke-width="1.500"/>`),
  wars: () => S(16, 16, svg`<path d="M8 0l6 3 2 5-2 5-6 3-6-3-2-5 2-5z" fill="#e85a5a"/><circle cx="8" cy="8" r="4.500" stroke="#7c1d22" stroke-width="1.100"/><path d="M5 6l6 4M6 11l4-6M4.500 9h7M8 4v8" stroke="#7c1d22" stroke-width=".8"/>`),
};

@customElement("browser-window")
class BrowserWindow extends Fitted {
  static styles = [base, css`
    :host { width: 1916px; height: 998px; background: #000; overflow: hidden; }
    .bar { height: 79px; background: #3c3c3c; border-radius: 0 8px 0 0; border-bottom: 1px solid #4a4a4a; padding-top: 4px; }
    .top { display: flex; align-items: center; height: 34px; }
    .nav { width: 116px; display: flex; align-items: center; padding-left: 12px; }
    .n1 { margin-right: 24px; } .n2 { margin-right: 23px; }
    .omni { width: 1625px; height: 34px; border-radius: 17px; background: #282828; display: flex; align-items: center; padding: 0 15px 0 5px; color: #e3e3e3; font-size: 13.700px; }
    .site { width: 24px; height: 24px; border-radius: 50%; background: #3c3c3c; display: flex; align-items: center; justify-content: center; margin-right: 8px; }
    .star { margin-left: auto; }
    .ext { display: flex; align-items: center; flex: 1; padding-left: 19px; }
    .e2 { margin-left: 21px; } .v { width: 1px; background: #5f5f5f; height: 16px; flex: none; }
    .e3 { margin-left: 18px; } .e4 { margin-left: 16px; } .e5 { margin-left: 24px; }
    .marks { display: flex; align-items: center; height: 40px; padding-left: 15px; color: #c7c7c7; }
    .marks .v1 { margin: 0 15px 0 16px; }
    .bm { display: flex; align-items: center; margin-right: 16px; gap: 6px; flex: none; }
    .bm.f { gap: 8.200px; margin-right: 18px; }
    .bm.f.last { margin-right: 16px; }
    .bm.long { width: 138px; }
    .tail { margin-left: auto; display: flex; align-items: center; padding-right: 15px; }
    .page { display: flex; height: 919px; }
    .scroll { width: 15px; background: #2c2c2c; display: flex; flex-direction: column; align-items: center; padding: 6px 0; }
    .thumb { width: 9px; height: 798px; border-radius: 5px; background: #9f9f9f; margin-top: 6px; }
    .dn { margin-top: auto; }
    .main { flex: 1; background: #f8f9fa; padding: 24px 304px 0 301px; color: #212529; font-size: 15.600px; line-height: 24px; overflow: hidden; }
    h1 { margin: 0 0 24px; font-size: 39px; line-height: 48px; font-weight: 600; padding-top: 1px; height: 48px; }
    .card { background: #fff; border: 1px solid #d0d1d3; border-radius: 6px; padding: 16px; }
    .form { width: 1296px; height: 370px; }
    .h5 { font-size: 19.500px; line-height: 24px; font-weight: 600; margin-bottom: 8px; height: 24px; padding-top: 1px; }
    .lb { height: 24px; }
    .in { height: 38px; border: 1px solid #dee2e6; border-radius: 6px; margin-bottom: 8px; }
    .in.ta { height: 62px; display: flex; justify-content: flex-end; align-items: flex-end; padding: 2px; }
    .chk { display: flex; align-items: center; gap: 8px; height: 24px; margin-bottom: 8px; }
    .box { width: 16px; height: 16px; border-radius: 4px; background: #3a6dfe; display: flex; align-items: center; justify-content: center; }
    .btns { display: flex; gap: 12px; }
    .btn { height: 38px; border-radius: 6px; display: flex; align-items: center; justify-content: center; color: #fff; border: 1px solid transparent; padding-top: 1px; }
    .save { width: 118px; background: #3a6dfe; } .cancel { width: 73px; background: #6e757c; }
    .filters { display: flex; margin: 24px 0 16px; }
    .fa { width: 44px; border-color: #3a6dfe; color: #3a6dfe; margin-right: 4px; }
    .fb { width: 89px; border-color: #2f8558; color: #2f8558; margin-right: 5px; }
    .fc { width: 107px; border-color: #d13d48; color: #d13d48; }
    .grid { display: grid; grid-template-columns: repeat(3, 421px); gap: 16px; }
    .item { height: 217px; }
    .p { height: 24px; margin-bottom: 16px; }
    .p b { font-weight: 700; }
    .ok { color: #2f8558; } .no { color: #d13d48; }
    .sm { height: 31px; font-size: 13.600px; border-radius: 4px; }
    .ed { width: 41px; background: #f9c22b; color: #000; } .de { width: 58px; background: #d13d48; }
  `];

  render() {
    const folders: [string, number][] = [["novine", 36], ["face,njuš", 46], ["Faks", 23], ["programiranje", 75], ["Ruby", 27], ["Naocale", 43], ["Toprrent", 45]];
    const sites: [string, string, number, boolean][] = [
      ["cv", "ExpressCV - App", 88, false], ["cu", "cuOnline Plus", 72, false], ["wilde", "WILDE | Harry Street...", 116, true], ["oracle", "Oracle ALTER TABLE...", 113, true],
      ["roo", "Mockaroo - Rando...", 108, true], ["code", "Coding Games and...", 109, true], ["wars", "Codewars - Achieve...", 113, true]];
    const items: [string, number, string, number, string, boolean][] = [
      ["bread", 51, "food", 33, "$5.5", true], ["fish", 31.5, "meat", 35, "$5.6", false], ["crisps", 51, "snacks", 45, "$1.5", true], ["beer", 40, "drink", 36, "$2.5", false]];
    return html`
      <div class="bar">
        <div class="top">
          <div class="nav">
            <div class="n1">${S(12, 12, svg`<path d="M12 6H1.500M6.500.7L1.200 6l5.300 5.300" stroke="#7d7d7d" stroke-width="1.500"/>`)}</div>
            <div class="n2">${S(12, 12, svg`<path d="M0 6h10.500M5.500.7L10.800 6l-5.300 5.300" stroke="#7d7d7d" stroke-width="1.500"/>`)}</div>
            ${S(13, 13, svg`<path d="M11.500 4.200A5.600 5.600 0 1 0 12 8" stroke="#c7c7c7" stroke-width="1.600"/><path d="M12.200.5v4.300H8" stroke="#c7c7c7" stroke-width="1.600"/>`)}
          </div>
          <div class="omni"><div class="site">${S(14, 12, svg`<circle cx="3" cy="3" r="2" stroke="#dcdcdc" stroke-width="1.500"/><path d="M7 3h6M1 9.500h6" stroke="#dcdcdc" stroke-width="1.600"/><circle cx="11" cy="9.500" r="2" stroke="#dcdcdc" stroke-width="1.500"/>`)}</div>${T("calm-bubblegum-2937ad.netlify.app", 225)}
            <div class="star">${S(16, 16, svg`<path d="M8 1.800l1.900 4.200 4.500.5-3.400 3 1 4.500L8 11.700 4 14l1-4.500-3.400-3 4.500-.5z" stroke="#c7c7c7" stroke-width="1.400"/>`)}</div></div>
          <div class="ext">
            ${S(16, 16, svg`<path d="M4.700 0h6.600L16 4.700v6.600L11.300 16H4.700L0 11.300V4.700z" fill="#e02020"/><path d="M5 9V5.500M7 8V3.500M9 8V4M11 8.500V5" stroke="#fff" stroke-width="1.500" stroke-linecap="round"/><path d="M4.300 8h7.400v1.500c0 2-1.500 3.500-3.500 3.500S5.500 12 4.300 9.500z" fill="#fff"/>`)}
            <div class="e2">${S(16, 16, svg`<path d="M1.500 3.500h4c0-3 4-3 4 0h4v4c3 0 3 3.500 0 3.500v4h-12v-4c3 0 3-3.500 0-3.500z" stroke="#c7c7c7" stroke-width="1.500" stroke-linejoin="round"/>`)}</div>
            <div class="v e3"></div>
            <div class="e4">${S(20, 20, svg`<circle cx="10" cy="10" r="10" fill="#a9a5b0"/><path d="M5 9c0-7 10-7 10 0l-1 4c-2 4-6 4-8 0z" fill="#c59a85"/><path d="M3 17c3-4 11-4 14 0a10 10 0 0 1-14 0z" fill="#3f5a86"/>`)}</div>
            <div class="e5">${S(3, 14, svg`<circle cx="1.500" cy="1.700" r="1.500" fill="#c7c7c7"/><circle cx="1.500" cy="7" r="1.500" fill="#c7c7c7"/><circle cx="1.500" cy="12.300" r="1.500" fill="#c7c7c7"/>`)}</div>
          </div>
        </div>
        <div class="marks">
          ${S(14, 14, svg`<path d="M.8.800h4.400v4.400H.8zM8.800.8h4.400v4.400H8.800zM.8 8.800h4.400v4.400H.8zM8.800 8.800h4.400v4.400H8.800z" stroke="#c7c7c7" stroke-width="1.500"/>`)}
          <div class="v v1"></div>
          ${folders.map((f, i) => html`<div class="bm f ${i === 6 ? "last" : ""}">${bFolder()}${T(f[0], f[1])}</div>`)}
          ${sites.map((s) => html`<div class="bm ${s[3] ? "long" : ""}">${fav[s[0]]()}${T(s[1], s[2])}</div>`)}
          <div class="tail">${S(12, 10, svg`<path d="M1.500 1l4 4-4 4M6.500 1l4 4-4 4" stroke="#c7c7c7" stroke-width="1.400"/>`)}<div style="width:17px"></div><div class="v"></div><div style="width:16px"></div>${bFolder()}<div style="width:8px"></div>${T("All Bookmarks", 75)}</div>
        </div>
      </div>
      <div class="page">
        <div class="main">
          <h1>${T("Product Manager", 314)}</h1>
          <div class="card form">
            <div class="h5">${T("Add / Edit Product", 168)}</div>
            <div class="lb">${T("Name", 42)}</div><div class="in"></div>
            <div class="lb">${T("Description", 80)}</div><div class="in ta">${S(9, 9, svg`<path d="M0 9L9 0M5 9l4-4" stroke="#888"/>`)}</div>
            <div class="lb">${T("Price", 34)}</div><div class="in"></div>
            <div class="chk"><div class="box">${S(9, 8, svg`<path d="M1 4l2.500 2.500L8 1.500" stroke="#fff" stroke-width="2" stroke-linecap="round" stroke-linejoin="round"/>`)}</div>${T("Available", 63.5)}</div>
            <div class="btns"><div class="btn save">${T("Save Product", 92.5)}</div><div class="btn cancel">${T("Cancel", 46.5)}</div></div>
          </div>
          <div class="filters"><div class="btn fa">${T("All", 18)}</div><div class="btn fb">${T("Available", 63.5)}</div><div class="btn fc">${T("Unavailable", 81.5)}</div></div>
          <div class="grid">${items.map((p, i) => html`<div class="card item">
            <div class="h5">${T(p[0], p[1])}</div>
            <div class="p">${T(p[2], p[3])}</div>
            <div class="p"><b>${T("Price:", 41.5)}</b>${T(" ", 4.5)}${T(p[4], 28.5)}</div>
            <div class="p ${p[5] ? "ok" : "no"}">${p[5] ? T("Available", 63.5) : T("Unavailable", 81.5)}</div>
            ${i < 3 ? html`<div class="btns"><div class="btn sm ed">${T("Edit", 23.5)}</div><div class="btn sm de">${T("Delete", 40)}</div></div>` : nothing}
          </div>`)}</div>
        </div>
        <div class="scroll">${S(9, 6, svg`<path d="M4.500 0L9 6H0z" fill="#9f9f9f"/>`)}<div class="thumb"></div><div class="dn">${S(9, 6, svg`<path d="M4.500 6L0 0h9z" fill="#9f9f9f"/>`)}</div></div>
      </div>`;
  }
}

/* ---------- root ---------- */

@customElement("app-root")
class AppRoot extends LitElement {
  static styles = css`
    :host { display: block; width: 3840px; height: 1080px; background: #fff; overflow: hidden; }
    .screens { display: flex; height: 998px; }
    .desk { position: relative; flex: 1; background: #000; overflow: hidden; }
    .desk desk-icon { position: absolute; }
    .desk explorer-window { position: absolute; left: 84px; top: 186px; }
    .bars { display: flex; }
  `;
  render() {
    /* centre x and label centre y on the desktop, picture kind, label lines */
    const icons: [number, number, string, [string, number][]][] = [
      [342, 125, "papers", [["New folder", 58]]],
      [570, 125, "nested", [["New folder", 58], ["(3)", 13]]],
      [798, 125, "code", [["weather-app", 67]]],
      [1026, 125, "excel", [["^CA", 23], ["Schedule H...", 69]]],
      [1102, 226, "arrow", [["New folder", 58], ["(2)", 13]]],
      [1482, 125, "disc", [["Win.10.Entr...", 69]]],
      [1634, 125, "photo", [["History", 37]]],
      [1330, 529, "nested", [["Zoom", 31]]],
      [798, 832, "code", [["FullStackA...", 66]]],
    ];
    return html`
      <div class="screens">
        <browser-window></browser-window>
        <div class="desk">
          ${icons.map((i) => html`<desk-icon .kind=${i[2]} .lines=${i[3]} style="left:${i[0] - 40}px;top:${i[1] - 59}px"></desk-icon>`)}
          <explorer-window></explorer-window>
        </div>
      </div>
      <div class="bars"><task-bar full></task-bar><task-bar></task-bar></div>`;
  }
}
